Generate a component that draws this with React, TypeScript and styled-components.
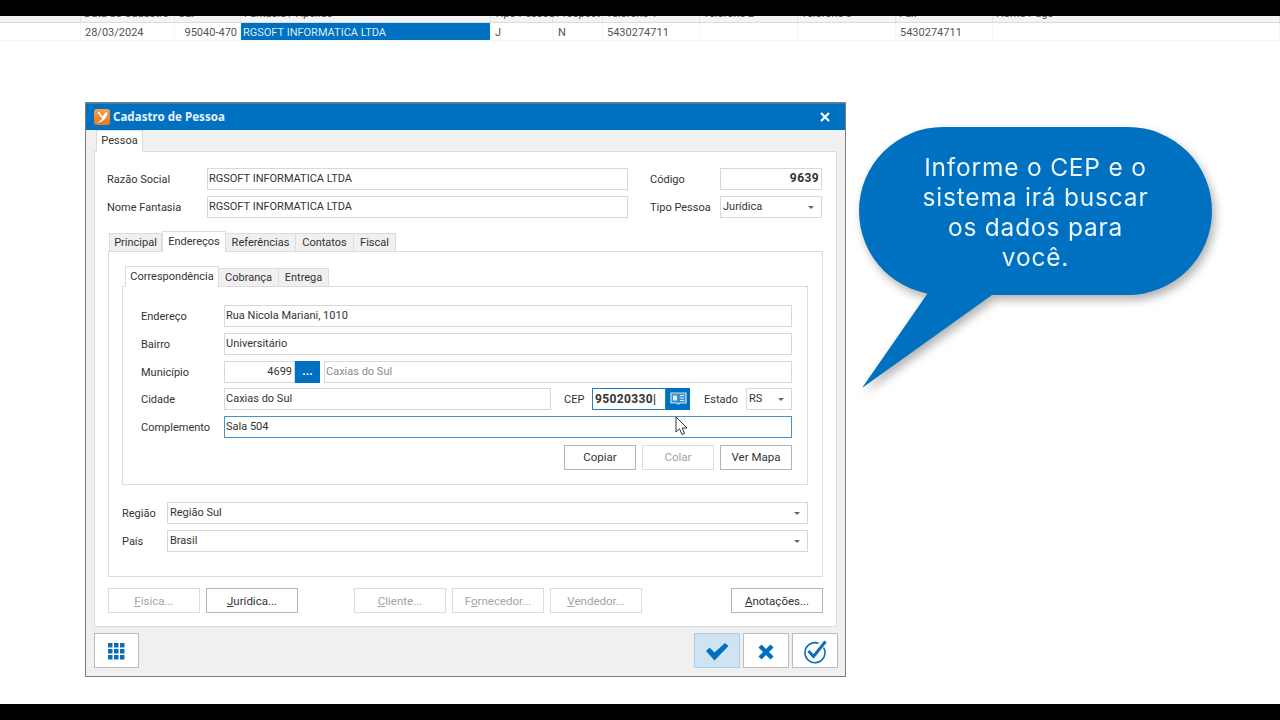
import React from "react";
import styled, { createGlobalStyle } from "styled-components";

const Global = createGlobalStyle`
  html, body { margin: 0; padding: 0; background: #fff; }
  body { font-family: Roboto, "Liberation Sans", sans-serif; font-size: 11px; color: #333; }
  * { box-sizing: border-box; }
`;

const Page = styled.div`
  width: 1280px; height: 720px; display: flex; flex-direction: column; overflow: hidden; background: #fff;
`;
const Letterbox = styled.div`height: 16px; flex: none; background: #000;`;
const Grid = styled.div`flex: none; display: flex; flex-direction: column;`;
const GridRow = styled.div<{ $head?: boolean }>`
  display: grid;
  grid-template-columns: 81px 94px 66px 250px 62px 50px 97px 98px 98px 97px 1fr;
  height: ${p => (p.$head ? "7px" : "18px")};
  overflow: hidden;
  background: ${p => (p.$head ? "#f3f3f3" : "#fff")};
  border-bottom: 1px solid ${p => (p.$head ? "#dcdcdc" : "#f6f6f6")};
`;
const HeadCell = styled.div`
  display: flex; align-items: flex-end; padding: 0 0 2px 3px; line-height: 12px; height: 6px; color: #555;
  border-right: 1px solid #e2e2e2; white-space: nowrap; font-size: 11px;
`;
const Cell = styled.div<{ $sel?: boolean; $right?: boolean; $center?: boolean }>`
  padding: 0 3px 0 ${p => (p.$sel ? "2px" : p.$center ? "5px" : "4px")};
  line-height: 20px; white-space: nowrap; color: ${p => (p.$sel ? "#dcecf8" : "#555")};
  background: ${p => (p.$sel ? "#0070c0" : "transparent")};
  text-align: ${p => (p.$right ? "right" : "left")};
  border-right: 1px solid #f6f6f6; font-size: 11px;
`;

const Stage = styled.div`flex: 1; display: flex; align-items: flex-start; padding: 61px 0 0 85px;`;

const Dialog = styled.div`
  width: 761px; height: 575px; flex: none; border: 1px solid #7d7d7d; background: #f0f0f0;
  display: flex; flex-direction: column;
`;
const TitleBar = styled.div`
  height: 27px; flex: none; background: #0070c0; display: flex; align-items: center;
  padding: 0 15px 1px 8px; gap: 3px; border-top: 1px solid #2c7fb8;
`;
const Title = styled.div`flex: 1; color: #e8f3fb; font: 700 11.5px "Noto Sans", Roboto, sans-serif; letter-spacing: 0.05px; padding-bottom: 1px;`;
const Body = styled.div`flex: 1; display: flex; flex-direction: column; padding: 0 8px;`;

const Strip = styled.div<{ $ml?: number }>`
  display: flex; align-items: flex-end; margin: 0 0 -1px ${p => p.$ml ?? 0}px; position: relative; z-index: 1;
`;
const Tab = styled.div<{ $active?: boolean; $w: number; $h?: number }>`
  width: ${p => p.$w}px;
  height: ${p => p.$h ?? (p.$active ? 21 : 19)}px;
  display: flex; align-items: center; justify-content: center;
  padding-bottom: ${p => (p.$active ? 1 : 0)}px;
  background: ${p => (p.$active ? "#fff" : "#f0f0f0")};
  border: 1px solid #dcdcdc;
  border-bottom: ${p => (p.$active ? "1px solid #fff" : "1px solid #dcdcdc")};
  color: #333; font-size: 11px; white-space: nowrap;
  margin-left: ${p => (p.$active ? 0 : -1)}px;
`;
const MainPanel = styled.div`
  width: 743px; height: 476px; flex: none; background: #fff; border: 1px solid #dcdcdc;
  padding: 16px 13px 0 12px; display: flex; flex-direction: column;
`;
const Header = styled.div`
  display: grid; grid-template-columns: 100px 421px 22px 70px 102px; grid-auto-rows: 22px; row-gap: 6px; align-items: center;
`;
const Label = styled.div<{ $w?: number; $pl?: number }>`
  ${p => (p.$w ? `width: ${p.$w}px; flex: none;` : "")}
  color: #333; font-size: 11px; white-space: nowrap; padding: 1px 0 0 ${p => p.$pl ?? 0}px;
`;
const Input = styled.div<{ $w?: number; $grow?: boolean; $focus?: boolean; $right?: boolean; $muted?: boolean; $ml?: number }>`
  ${p => (p.$w ? `width: ${p.$w}px; flex: none;` : "")}
  ${p => (p.$grow ? "flex: 1; min-width: 0;" : "")}
  margin-left: ${p => p.$ml ?? 0}px;
  height: 22px; display: flex; align-items: center; padding: 0 2px 1px 1px; background: ${p => (p.$focus ? "#fffffd" : "#fff")};
  border: 1px solid ${p => (p.$focus ? "#4a93c9" : "#d8d8d8")};
  font-size: 11px; color: ${p => (p.$muted ? "#8a8a8a" : "#333")};
  justify-content: ${p => (p.$right ? "flex-end" : "flex-start")};
  white-space: nowrap;
`;
const HeaderInput = styled(Input)`padding-bottom: 2px;`;
const CodeInput = styled(Input)`font-size: 12px; font-weight: 700; letter-spacing: 0.4px; padding-right: 2px; padding-bottom: 2px;`;
const CepInput = styled(Input)`
  border-color: #1f7fc8; background: #fff; font-size: 12px; font-weight: 700; letter-spacing: 0.35px; padding-left: 2px;
`;
const SelectBox = styled(Input)`justify-content: space-between; padding-right: 7px; padding-left: 2px;`;
const Caret = styled.span`
  width: 0; height: 0; border: 3px solid transparent; border-top: 3px solid #666; border-bottom: 0; flex: none; margin-top: 2px;
`;
const Spacer = styled.div``;
const TabsBox = styled.div`margin: 13px 0 0 1px; display: flex; flex-direction: column;`;
const OuterPanel = styled.div`
  width: 715px; height: 326px; border: 1px solid #dcdcdc; background: #fff; padding: 14px 14px 0 13px;
  display: flex; flex-direction: column;
`;
const InnerPanel = styled.div`
  height: 199px; border: 1px solid #dcdcdc; background: #fff; padding: 18px 15px 0 18px;
  display: flex; flex-direction: column; gap: 5.75px;
`;
const Row = styled.div`display: flex; align-items: center; height: 22px; position: relative;`;
const BlueBtn = styled.div<{ $w: number }>`
  width: ${p => p.$w}px; height: 22px; flex: none; background: #0070c0; color: #fff; display: flex; align-items: center; justify-content: center;
  font-size: 12px; font-weight: 700; padding-bottom: 2px;
`;
const ActionRow = styled.div`display: flex; justify-content: flex-end; gap: 6px; margin-top: 1px;`;
const Button = styled.div<{ $w?: number; $off?: boolean }>`
  width: ${p => p.$w ?? 72}px; height: 25px; flex: none; display: flex; align-items: center; justify-content: center;
  background: #fff; border: 1px solid ${p => (p.$off ? "#dcdcdc" : "#b5b5b5")};
  color: ${p => (p.$off ? "#a3a3a3" : "#333")}; font-size: 11.5px; white-space: nowrap;
`;
const Cursor = styled.svg`position: absolute; left: 534px; top: 28px; z-index: 2;`;
const SelectRows = styled.div`display: flex; flex-direction: column; gap: 6px; margin-top: 17px;`;
const ButtonsBar = styled.div`display: flex; margin: 11px 0 0 1px; width: 715px; gap: 6px;`;
const GroupGap = styled.div`width: 44px; flex: none;`;
const Push = styled.div`flex: 1;`;
const Footer = styled.div`display: flex; align-items: flex-start; gap: 3px; padding-top: 6px; margin-right: -1px;`;
const FootBtn = styled.div<{ $active?: boolean; $w?: number }>`
  width: ${p => p.$w ?? 46}px; height: 35px; flex: none; display: flex; align-items: center; justify-content: center;
  padding-top: 2px;
  background: ${p => (p.$active ? "#cfe3f2" : "#fff")};
  border: 1px solid ${p => (p.$active ? "#a9cde6" : "#bdbdbd")};
`;

const BubbleWrap = styled.div`
  position: relative; margin: 25px 0 0 13px; width: 353px; height: 168px; flex: none;
  filter: drop-shadow(3px 5px 5px rgba(0,0,0,.3));
`;
const BubbleBody = styled.div`
  width: 353px; height: 168px; border-radius: 84px; background: #0070c0; color: #eaf5fc;
  display: flex; align-items: center; justify-content: center; text-align: center; position: relative;
  font: 400 24.5px/30px Inter, "Open Sans", sans-serif; letter-spacing: 0.8px; padding: 2px 0 0 0;
`;
const Tail = styled.svg`position: absolute; left: 0; top: 160px;`;

const Logo = () => (
  <svg width="16" height="16" viewBox="0 0 16 16">
    <defs>
      <linearGradient id="lg" x1="0" y1="0" x2="0" y2="1">
        <stop offset="0" stopColor="#f6a04a" />
        <stop offset="1" stopColor="#e87a1e" />
      </linearGradient>
    </defs>
    <rect width="16" height="16" rx="2.5" fill="url(#lg)" />
    <path d="M5 2.5 L8.5 7.5 L12 3 L13.5 4 C12.5 9.5 9 13 3 14 C6 12 7.5 11 8.2 9.5 L3.5 3.5Z" fill="#fff" />
  </svg>
);
const CloseX = () => (
  <svg width="10" height="10" viewBox="0 0 10 10"><path d="M1 1 L9 9 M9 1 L1 9" stroke="#fff" strokeWidth="2.2" /></svg>
);
const BookIcon = () => (
  <svg width="17" height="14" viewBox="0 0 17 14" fill="none">
    <path d="M1 2 H16 V12 H10 L8.5 13 L7 12 H1Z" stroke="#cfe6f6" strokeWidth="1.2" fill="#3a8fcc" />
    <path d="M3 4.5 H7 V9.5 H3Z" fill="#dcedf9" />
    <path d="M10 4.5 H14 M10 7 H14 M10 9.5 H14" stroke="#dcedf9" strokeWidth="1.1" />
  </svg>
);
const Dots = () => (
  <svg width="17" height="17" viewBox="0 0 17 17" fill="#0f6cb0">
    {[0, 6, 12].flatMap(y => [0, 6, 12].map(x => <rect key={`${x}-${y}`} x={x} y={y} width="4.5" height="4.5" />))}
  </svg>
);
const Check = () => (
  <svg width="24" height="19" viewBox="0 0 24 19"><path d="M1 9 L4.5 5.5 L9.5 10.5 L20 1 L23.5 4 L9.5 18.5Z" fill="#0070c0" /></svg>
);
const BigX = () => (
  <svg width="16" height="16" viewBox="0 0 16 16"><path d="M2 2 L14 14 M14 2 L2 14" stroke="#0070c0" strokeWidth="4.4" /></svg>
);
const CheckCircle = () => (
  <svg width="26" height="26" viewBox="0 0 26 26" fill="none">
    <path d="M21.6 8.6 A10 10 0 1 1 16.5 4.3" stroke="#0c70b8" strokeWidth="1.6" />
    <path d="M6.5 12 L11.5 17.5 L23.5 2.5" stroke="#0c70b8" strokeWidth="3" />
  </svg>
);

const heads = ["", "Data de Cadastro", "CEP", "Fantasia / Apelido", "Tipo Pessoa", "Prospect", "Telefone 1", "Telefone 2", "Telefone 3", "Fax", "Home Page"];

export default function App() {
  return (
    <Page>
      <Global />
      <Letterbox />
      <Grid>
        <GridRow $head>{heads.map((h, i) => <HeadCell key={i}>{h}</HeadCell>)}</GridRow>
        <GridRow>
          <Cell />
          <Cell>28/03/2024</Cell>
          <Cell $right>95040-470</Cell>
          <Cell $sel>RGSOFT INFORMATICA LTDA</Cell>
          <Cell>J</Cell>
          <Cell $center>N</Cell>
          <Cell>5430274711</Cell>
          <Cell />
          <Cell />
          <Cell>5430274711</Cell>
          <Cell />
        </GridRow>
      </Grid>
      <Stage>
        <Dialog>
          <TitleBar>
            <Logo />
            <Title>Cadastro de Pessoa</Title>
            <CloseX />
          </TitleBar>
          <Body>
            <Strip $ml={2}><Tab $active $w={47} $h={22}>Pessoa</Tab></Strip>
            <MainPanel>
              <Header>
                <Label>Razão Social</Label>
                <HeaderInput>RGSOFT INFORMATICA LTDA</HeaderInput>
                <Spacer />
                <Label>Código</Label>
                <CodeInput $right>9639</CodeInput>
                <Label>Nome Fantasia</Label>
                <HeaderInput>RGSOFT INFORMATICA LTDA</HeaderInput>
                <Spacer />
                <Label>Tipo Pessoa</Label>
                <SelectBox>Jurídica<Caret /></SelectBox>
              </Header>
              <TabsBox>
                <Strip $ml={2}>
                  <Tab $w={53}>Principal</Tab>
                  <Tab $active $w={64}>Endereços</Tab>
                  <Tab $w={71}>Referências</Tab>
                  <Tab $w={59}>Contatos</Tab>
                  <Tab $w={43}>Fiscal</Tab>
                </Strip>
                <OuterPanel>
                  <Strip $ml={3}>
                    <Tab $active $w={94}>Correspondência</Tab>
                    <Tab $w={61}>Cobrança</Tab>
                    <Tab $w={51}>Entrega</Tab>
                  </Strip>
                  <InnerPanel>
                    <Row><Label $w={83}>Endereço</Label><Input $grow>Rua Nicola Mariani, 1010</Input></Row>
                    <Row><Label $w={83}>Bairro</Label><Input $grow>Universitário</Input></Row>
                    <Row>
                      <Label $w={83}>Município</Label>
                      <Input $w={71} $right>4699</Input>
                      <BlueBtn $w={25}>...</BlueBtn>
                      <Input $grow $muted $ml={4}>Caxias do Sul</Input>
                    </Row>
                    <Row>
                      <Label $w={83}>Cidade</Label>
                      <Input $w={327}>Caxias do Sul</Input>
                      <Label $w={41} $pl={13}>CEP</Label>
                      <CepInput $w={74}>95020330|</CepInput>
                      <BlueBtn $w={24}><BookIcon /></BlueBtn>
                      <Label $w={56} $pl={14}>Estado</Label>
                      <SelectBox $grow>RS<Caret /></SelectBox>
                      <Cursor width="14" height="20" viewBox="0 0 14 20">
                        <path d="M1 1 V16 L4.5 12.8 L7 18.5 L9.5 17.5 L7.2 12 H12Z" fill="#fff" stroke="#333" strokeWidth="1" />
                      </Cursor>
                    </Row>
                    <Row><Label $w={83}>Complemento</Label><Input $grow $focus>Sala 504</Input></Row>
                    <ActionRow>
                      <Button>Copiar</Button>
                      <Button $off>Colar</Button>
                      <Button>Ver Mapa</Button>
                    </ActionRow>
                  </InnerPanel>
                  <SelectRows>
                    <Row><Label $w={45}>Região</Label><SelectBox $grow>Região Sul<Caret /></SelectBox></Row>
                    <Row><Label $w={45}>País</Label><SelectBox $grow>Brasil<Caret /></SelectBox></Row>
                  </SelectRows>
                </OuterPanel>
              </TabsBox>
              <ButtonsBar>
                <Button $w={92} $off><u>F</u>ísica...</Button>
                <Button $w={92}><u>J</u>urídica...</Button>
                <GroupGap />
                <Button $w={92} $off><u>C</u>liente...</Button>
                <Button $w={92} $off>F<u>o</u>rnecedor...</Button>
                <Button $w={92} $off><u>V</u>endedor...</Button>
                <Push />
                <Button $w={92}><u>A</u>notações...</Button>
              </ButtonsBar>
            </MainPanel>
            <Footer>
              <FootBtn $w={45}><Dots /></FootBtn>
              <Push />
              <FootBtn $active><Check /></FootBtn>
              <FootBtn><BigX /></FootBtn>
              <FootBtn><CheckCircle /></FootBtn>
            </Footer>
          </Body>
        </Dialog>
        <BubbleWrap>
          <Tail width="140" height="104" viewBox="0 0 140 104">
            <path d="M73 0 L3 101 L133 8 L133 0Z" fill="#0070c0" />
          </Tail>
          <BubbleBody>Informe o CEP e o<br />sistema irá buscar<br />os dados para<br />você.</BubbleBody>
        </BubbleWrap>
      </Stage>
      <Letterbox />
    </Page>
  );
}
